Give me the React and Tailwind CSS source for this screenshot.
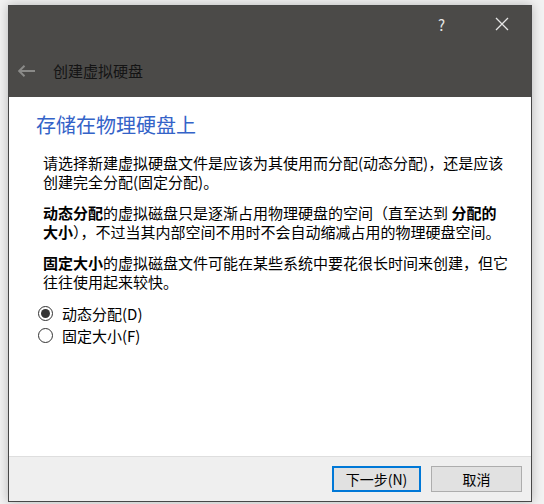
import React from 'react';

const font = { fontFamily: '"Noto Sans CJK SC", "Noto Sans", sans-serif' };

export default function App() {
  return (
    <div
      className="w-[544px] h-[504px] bg-[#f2f2f2] pt-[5px] pl-[8px] pr-[12px] pb-[2px]"
      style={font}
    >
      <div className="h-full flex flex-col border border-[#474747] shadow-[0_0_10px_rgba(0,0,0,0.25)]">
        {/* title bar */}
        <div className="h-[91px] bg-[#4b4a48] flex flex-col">
          <div className="h-[36px] flex items-center justify-end pr-[16px] gap-[50px]">
            <span className="text-[15px] text-[#e6e6e6] leading-none">?</span>
            <svg width="14" height="14" viewBox="0 0 14 14" className="mr-[6px]">
              <path d="M1 1 L13 13 M13 1 L1 13" stroke="#e6e6e6" strokeWidth="1.3" />
            </svg>
          </div>
          <div className="flex items-center h-[30px] mt-[14px]">
            <svg width="18" height="12" viewBox="0 0 18 12" className="ml-[9px]">
              <path d="M1 6 H17 M6.5 0.8 L1.2 6 L6.5 11.2" stroke="#8a8a88" strokeWidth="2" fill="none" />
            </svg>
            <span className="ml-[17px] text-[15px] text-[#141414]">创建虚拟硬盘</span>
          </div>
        </div>

        {/* content */}
        <div className="flex-1 bg-white pl-[27px] pt-[14px]">
          <h1 className="text-[20px] leading-[28px] text-[#3463c8]">存储在物理硬盘上</h1>

          <div className="pl-[7px] text-[15px] leading-[19px] text-black">
            <p className="mt-[14px] whitespace-nowrap">
              请选择新建虚拟硬盘文件是应该为其使用而分配(动态分配)，还是应该
              <br />
              创建完全分配(固定分配)。
            </p>
            <p className="mt-[12px] whitespace-nowrap">
              <b>动态分配</b>的虚拟磁盘只是逐渐占用物理硬盘的空间（直至达到 <b>分配的</b>
              <br />
              <b>大小</b>），不过当其内部空间不用时不会自动缩减占用的物理硬盘空间。
            </p>
            <p className="mt-[12px] whitespace-nowrap">
              <b>固定大小</b>的虚拟磁盘文件可能在某些系统中要花很长时间来创建，但它
              <br />
              往往使用起来较快。
            </p>

            <div className="mt-[11px] -ml-[5px] flex flex-col">
              <label className="flex items-center h-[22px]">
                <span className="w-[15px] h-[15px] rounded-full border border-[#333] flex items-center justify-center">
                  <span className="w-[9px] h-[9px] rounded-full bg-[#333]" />
                </span>
                <span className="ml-[9px]">动态分配(D)</span>
              </label>
              <label className="flex items-center h-[22px]">
                <span className="w-[15px] h-[15px] rounded-full border border-[#333]" />
                <span className="ml-[9px]">固定大小(F)</span>
              </label>
            </div>
          </div>
        </div>

        {/* footer */}
        <div className="h-[45px] bg-[#efefef] border-t border-[#dedede] flex items-center justify-end pr-[9px] gap-[10px]">
          <button className="w-[89px] h-[26px] border-2 border-[#0078d7] bg-[#e1e1e1] text-[14px] text-black">
            下一步(N)
          </button>
          <button className="w-[91px] h-[26px] border border-[#adadad] bg-[#e1e1e1] text-[14px] text-black">
            取消
          </button>
        </div>
      </div>
    </div>
  );
}
